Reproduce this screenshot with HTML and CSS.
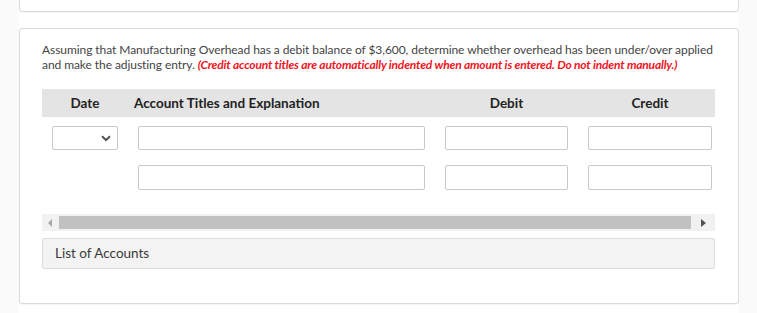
FILE: index.html
```html
<!DOCTYPE html>
<html lang="en">
  <head>
    <meta charset="UTF-8" />
    <meta name="viewport" content="width=device-width, initial-scale=1.0" />
    <title>Journal Entry</title>
    <link rel="stylesheet" href="styles.css">
  </head>
  <body>
    <div class="page">
      <div class="card card-prev"></div>
      <div class="card question">
        <p class="prompt">
          Assuming that Manufacturing Overhead has a debit balance of $3,600, determine whether overhead has been under/over applied<br>
          and make the adjusting entry. <span class="note">(Credit account titles are automatically indented when amount is entered. Do not indent manually.)</span>
        </p>
        <div class="journal">
          <div class="grid head">
            <div class="h-date">Date</div>
            <div class="h-acct">Account Titles and Explanation</div>
            <div class="h-num">Debit</div>
            <div class="h-num">Credit</div>
          </div>
          <div class="grid row">
            <div class="select">
              <svg width="10" height="7" viewBox="0 0 10 7"><path d="M1 1.2 L5 5 L9 1.2" fill="none" stroke="#555" stroke-width="2"/></svg>
            </div>
            <input class="field" type="text" />
            <input class="field" type="text" />
            <input class="field" type="text" />
          </div>
          <div class="grid row">
            <div></div>
            <input class="field" type="text" />
            <input class="field" type="text" />
            <input class="field" type="text" />
          </div>
        </div>
        <div class="scrollbar">
          <div class="sb-btn"><svg width="5" height="8" viewBox="0 0 5 8"><path d="M4 0 L0 4 L4 8 Z" fill="#a8a8a8"/></svg></div>
          <div class="sb-thumb"></div>
          <div class="sb-btn right"><svg width="5" height="8" viewBox="0 0 5 8"><path d="M0 0 L5 4 L0 8 Z" fill="#505050"/></svg></div>
        </div>
        <div class="accounts">List of Accounts</div>
      </div>
    </div>
  </body>
</html>
```

FILE: styles.css
```css
body {
  margin: 0;
  background-color: #fafafa;
  font-family: Lato, "Open Sans", sans-serif;
  color: #444;
}
.page {
  width: 720px;
  margin-left: 19px;
  height: 313px;
  background-color: #fff;
  overflow: hidden;
}
.card {
  border: 1px solid #dadada;
  border-radius: 3px;
  background-color: #fff;
  box-shadow: 0 1px 1px rgba(0, 0, 0, 0.04);
}
.card-prev {
  height: 40px;
  margin-top: -30px;
}
.question {
  margin-top: 16px;
  height: 274px;
  padding: 0 22px;
}
.prompt {
  margin: 13px 0 0;
  font-size: 12px;
  line-height: 15px;
  letter-spacing: -0.07px;
  white-space: nowrap;
}
.note {
  color: #f0141e;
  font-style: italic;
  font-weight: 700;
  letter-spacing: -0.18px;
}
.journal {
  margin-top: 17px;
  width: 673px;
}
.grid {
  display: grid;
  grid-template-columns: 66px 287px 123px 124px;
  column-gap: 20px;
  padding-left: 10px;
}
.head {
  background-color: #e4e4e4;
  height: 28px;
  align-items: center;
  font-size: 13.5px;
  font-weight: 700;
  color: #222;
}
.h-date,
.h-num {
  text-align: center;
}
.h-acct {
  margin-left: -4px;
}
.row {
  margin-top: 9px;
}
.row + .row {
  margin-top: 15px;
}
.field,
.select {
  box-sizing: border-box;
  height: 24px;
  border: 1px solid #c9c9c9;
  border-radius: 2px;
  background-color: #fff;
  margin: 0;
  padding: 0;
}
.row + .row .field {
  height: 25px;
}
.select {
  display: flex;
  align-items: center;
  justify-content: flex-end;
  padding-right: 6px;
}
.scrollbar {
  display: flex;
  width: 673px;
  height: 17px;
  margin-top: 24px;
  background-color: #f1f1f1;
}
.sb-btn {
  width: 17px;
  display: flex;
  align-items: center;
  justify-content: center;
}
.sb-btn.right {
  width: 24px;
}
.sb-thumb {
  flex: 1;
  margin: 2px 0;
  background-color: #c1c1c1;
}
.accounts {
  box-sizing: border-box;
  width: 673px;
  height: 31px;
  margin-top: 7px;
  padding-left: 12px;
  border: 1px solid #dcdcdc;
  border-radius: 2px;
  background-color: #f3f3f3;
  font-size: 13.5px;
  line-height: 29px;
  color: #3a3a3a;
}
```
